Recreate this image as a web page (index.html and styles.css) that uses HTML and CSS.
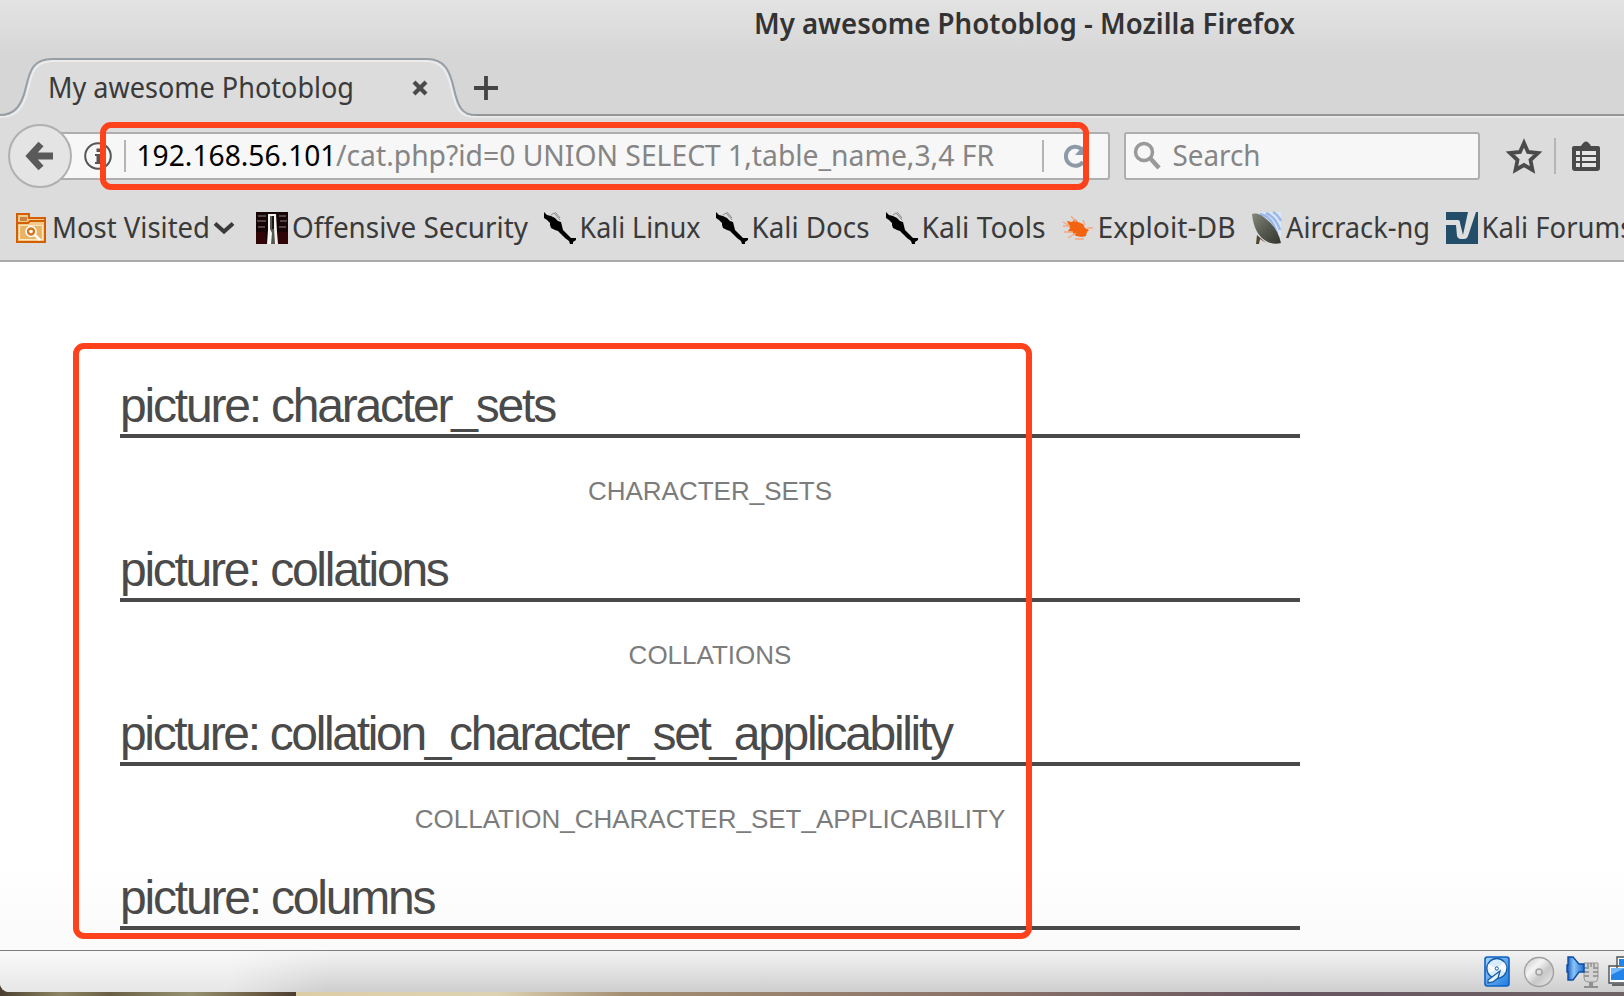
FILE: index.html
```html
<!DOCTYPE html>
<html lang="en">
<head>
<meta charset="utf-8">
<title>My awesome Photoblog</title>
<link rel="stylesheet" href="styles.css">
</head>
<body>
<svg class="defs" width="0" height="0">
  <defs>
    <symbol id="kali" viewBox="0 0 32 32">
      <path d="M0 0l3 3 4 1 4 2 3 3 3 1 1 4 1 4 4 4 4 4h5v2l-3 2v2h-3l-1-3-4-3-4-4-3-3-3-1-4-2-1-3v-2l-3-3-3-2z" fill="#000"/>
      <path d="M7 3l3-2 6 7M11 0l5 6" fill="none" stroke="#888" stroke-width="1"/>
    </symbol>
    <linearGradient id="blue" x1="0" y1="0" x2="1" y2="1"><stop offset="0" stop-color="#a9d4fb"/><stop offset="1" stop-color="#1c7be0"/></linearGradient>
    <linearGradient id="horn" x1="0" y1="0" x2="1" y2="0"><stop offset="0" stop-color="#1257b8"/><stop offset=".4" stop-color="#8cc4f8"/><stop offset="1" stop-color="#1d6fd0"/></linearGradient>
    <linearGradient id="disc" x1="0" y1="0" x2="1" y2="1"><stop offset="0" stop-color="#c4c4c4"/><stop offset=".35" stop-color="#f4f4f4"/><stop offset=".6" stop-color="#c8c8c8"/><stop offset="1" stop-color="#ececec"/></linearGradient>
    <linearGradient id="dish" x1="0" y1="0" x2="1" y2="1"><stop offset="0" stop-color="#85877b"/><stop offset=".5" stop-color="#565a50"/><stop offset="1" stop-color="#33352d"/></linearGradient>
  </defs>
</svg>
<div class="window">
  <header class="titlebar">
    <svg class="label title" width="539" height="40"><text x="-1" y="34" textLength="541" lengthAdjust="spacingAndGlyphs">My awesome Photoblog - Mozilla Firefox</text></svg>
  </header>
  <div class="tabs">
    <svg class="tab-shape" width="476" height="62" viewBox="0 0 476 62">
      <path class="tab-fill" d="M0 61C16 61 22 50 26 32S34 3 52 3H427C445 3 450 16 454 34S462 61 476 61V62H0z"/>
      <path class="tab-shine" d="M0 61C17 61 24 51 28 33S36 5 53 5H426C443 5 448 17 452 35S460 61 476 61"/>
      <path class="tab-line" d="M0 59C15 59 22 49 26 31S34 3 52 3H427C445 3 450 15 454 33S462 59 476 59"/>
    </svg>
    <div class="tab-content">
      <svg class="label" width="304" height="62"><text x="-1" y="42" textLength="306" lengthAdjust="spacingAndGlyphs">My awesome Photoblog</text></svg>
      <svg class="tab-close" width="16" height="16" viewBox="0 0 16 16"><path d="M2 2l12 12M14 2L2 14" stroke="#4a4a4a" stroke-width="4.200"/></svg>
      <svg class="tab-new" width="24" height="24" viewBox="0 0 24 24"><path d="M12 0v24M0 12h24" stroke="#444" stroke-width="3.800"/></svg>
    </div>
  </div>
  <div class="navbar">
    <div class="back"><svg width="28" height="30" viewBox="0 0 28 30"><path d="M15 3L4 15l11 12M5 15h22" fill="none" stroke="#5a5a5a" stroke-width="6.800"/></svg></div>
    <div class="urlbar">
      <svg class="info" width="28" height="28" viewBox="0 0 28 28"><circle cx="14" cy="14" r="12.800" fill="none" stroke="#555" stroke-width="2"/><path d="M12.500 6.500h4v3.500h-4zM11 12h5.500v8H18v2h-7v-2h1.500v-6H11z" fill="#555"/></svg>
      <i class="rule"></i>
      <svg class="label url" width="855" height="44"><text class="host" x="-1.500" y="32" textLength="200" lengthAdjust="spacingAndGlyphs">192.168.56.101</text><text class="path" x="198" y="32" textLength="658" lengthAdjust="spacingAndGlyphs">/cat.php?id=0 UNION SELECT 1,table_name,3,4 FR</text></svg>
      <i class="rule"></i>
      <svg class="reload" width="24" height="24" viewBox="0 0 24 24"><path d="M18.500 5A9.500 9.500 0 1 0 20 18" fill="none" stroke="#8d99a6" stroke-width="4"/><path d="M22 0v11H12z" fill="#8d99a6"/></svg>
    </div>
    <div class="search">
      <svg width="28" height="30" viewBox="0 0 28 30"><circle cx="11" cy="11" r="8.500" fill="none" stroke="#999" stroke-width="3.500"/><path d="M17 17l9 10" stroke="#999" stroke-width="4.500"/></svg>
      <svg class="label" width="86" height="44"><text x="-1.500" y="32" textLength="88" lengthAdjust="spacingAndGlyphs">Search</text></svg>
    </div>
    <svg class="star" width="34" height="34" viewBox="0 0 34 34"><path d="M17 4l4 9 10 1-7.500 7 2 10L17 26l-8.500 5 2-10L3 14l10-1z" fill="none" stroke="#4a4a4a" stroke-width="3.800"/></svg>
    <i class="rule tall"></i>
    <svg class="clipboard" width="28" height="30" viewBox="0 0 28 30"><path d="M2 5h7q5-9 10 0h7q2 0 2 2v20q0 3-3 3H3q-3 0-3-3V7q0-2 2-2z" fill="#4a4a4a"/><path d="M4 10h4v4H4zM10 10h14v4H10zM4 16h4v4H4zM10 16h14v4H10zM4 22h4v4H4zM10 22h14v4H10z" fill="#e6e6e6"/></svg>
  </div>
  <nav class="bookmarks">
    <a class="folder"><svg width="30" height="30" viewBox="0 0 30 30"><path d="M1 1h12v4h16v24H1z" fill="#f3c98d" stroke="#d45f00" stroke-width="2"/><path d="M2 10h10l2-2h14" fill="none" stroke="#d45f00" stroke-width="2"/><path d="M4 4h7v4H4z" fill="#c98240"/><path d="M3.500 12.500h23v14h-23z" fill="#e9b365" stroke="#ffe9bd" stroke-width="1.200"/><circle cx="15" cy="18.500" r="5" fill="#d77620" stroke="#fff" stroke-width="1.600"/><circle cx="15" cy="18.500" r="1.800" fill="#fff"/><path d="M19 22l5 5" stroke="#fff" stroke-width="2.500"/></svg>
      <svg class="label" width="156" height="44"><text x="-1" y="32" textLength="158" lengthAdjust="spacingAndGlyphs">Most Visited</text></svg>
      <svg class="chevron" width="20" height="12" viewBox="0 0 20 12"><path d="M1 1.500l9 8 9-8" fill="none" stroke="#3a3a3a" stroke-width="4"/></svg></a>
    <a><svg width="32" height="32" viewBox="0 0 32 32"><path d="M0 0h32v32H0z" fill="#170406"/><path d="M0 20h9l2 12H0zM22 20h10v12H21z" fill="#300508"/><path d="M2 4h8M1 9h9M2 15h7M23 4h7M24 9h7M23 15h7" stroke="#514247" stroke-width="2"/><path d="M12 2h8l1 18 1 12H11l1-14z" fill="#f4f4f1"/><path d="M14 4h4v12l1 16h-4l1-11-2-4z" fill="#565751"/><path d="M16 4h2v13h-2z" fill="#171916"/></svg>
      <svg class="label" width="235" height="44"><text x="-1" y="32" textLength="236" lengthAdjust="spacingAndGlyphs">Offensive Security</text></svg></a>
    <a><svg width="32" height="32"><use href="#kali"/></svg>
      <svg class="label" width="119" height="44"><text x="-1.500" y="32" textLength="121" lengthAdjust="spacingAndGlyphs">Kali Linux</text></svg></a>
    <a><svg width="32" height="32"><use href="#kali"/></svg>
      <svg class="label" width="115" height="44"><text x="-1.500" y="32" textLength="118" lengthAdjust="spacingAndGlyphs">Kali Docs</text></svg></a>
    <a><svg width="32" height="32"><use href="#kali"/></svg>
      <svg class="label" width="121" height="44"><text x="-1.500" y="32" textLength="124" lengthAdjust="spacingAndGlyphs">Kali Tools</text></svg></a>
    <a><svg width="31" height="32" viewBox="0 0 31 32"><path d="M4 9l5 1 3-3 3 3 5 2 2 4 4 2-2 2-1 4-4 1-6-1-4-4-4-1 2-3z" fill="#f26411"/><path d="M0 10l7 4M8 4l5 6M1 20h9M5 26l8-5M20 8l2 5M24 16h6M12 27h9M0 14h6" stroke="#f4a77c" stroke-width="1.300"/></svg>
      <svg class="label" width="135" height="44"><text x="-1.500" y="32" textLength="138" lengthAdjust="spacingAndGlyphs">Exploit-DB</text></svg></a>
    <a class="tight"><svg width="30" height="32" viewBox="0 0 30 32"><path d="M8 0h21v26z" fill="#dce7f7"/><path d="M8 2q12 2 17 20M14 1q10 4 14 17M21 0q5 3 8 9" fill="none" stroke="#9bb8e8" stroke-width="2.500"/><path d="M5 23l-1 9h3l1-5 6 4z" fill="#51452f"/><path d="M0 2q6-2 13 4 13 10 16 25-8 2-15-2Q2 22 0 2z" fill="url(#dish)"/></svg>
      <svg class="label" width="143" height="44"><text x="0" y="32" textLength="144" lengthAdjust="spacingAndGlyphs">Aircrack-ng</text></svg></a>
    <a><svg width="32" height="32" viewBox="0 0 32 32"><path d="M0 0h32v32H0z" fill="#234e69"/><path d="M0 8h12q2 0 2 3l3 12 5-23h8l-8 24q-1 3-4 3h-3q-3 0-4-3l-1-11H0z" fill="#dedede"/></svg>
      <svg class="label" width="141" height="44"><text x="-1.500" y="32" textLength="152" lengthAdjust="spacingAndGlyphs">Kali Forums</text></svg></a>
  </nav>
  <main class="page">
    <section><h2>picture: character_sets</h2><p>CHARACTER_SETS</p></section>
    <section><h2 class="snug">picture: collations</h2><p>COLLATIONS</p></section>
    <section><h2 class="snugger">picture: collation_character_set_applicability</h2><p>COLLATION_CHARACTER_SET_APPLICABILITY</p></section>
    <section><h2>picture: columns</h2></section>
  </main>
  <footer class="status">
    <svg width="26" height="31" viewBox="0 0 26 31"><rect x="1" y="1" width="24" height="29" rx="2.500" fill="url(#blue)" stroke="#0d61c4" stroke-width="1.600"/><circle cx="12.800" cy="12.500" r="10" fill="#d8ecff" stroke="#155da8" stroke-width="1.300"/><path d="M12.800 12.500L4 8q-1 5 2 9zM12.800 12.500L21 16q3-6-1-10z" fill="#fff" opacity=".8"/><circle cx="12.800" cy="12.500" r="1.600" fill="#fff" stroke="#155da8"/><path d="M16 15l-8 6-4 3v3l5-1 5-4z" fill="#e7f3ff" stroke="#155da8" stroke-width="1.300"/></svg>
    <svg class="cd" width="32" height="32" viewBox="0 0 32 32"><circle cx="16" cy="16" r="14.500" fill="url(#disc)" stroke="#a0a0a0" stroke-width="1.400"/><circle cx="16" cy="16" r="3" fill="#e0e0e0" stroke="#a3a3a3" stroke-width="1.500"/></svg>
    <svg class="audio" width="34" height="32" viewBox="0 0 34 32"><path d="M18 7h14v15q0 4-4 4h-6q-4 0-4-4z" fill="#d4d4d4" stroke="#999"/><path d="M18 12h5M18 16h5M18 20h5M27 12h5M27 16h5M27 20h5M22 7v4M25 7v4M28 7v4" stroke="#888" stroke-width="1.300"/><path d="M23 26h4v4h5v2H18v-2h5z" fill="#909090"/><path d="M2 1h5l6 7h5v8h-5l-6 8H2v-8H1V9h1z" fill="url(#horn)" stroke="#0b4ca8" stroke-width="1.400"/></svg>
    <svg width="16" height="31" viewBox="0 0 16 31"><path d="M9 1h9v14H9zM1 10h18v17H1z" fill="#fff" stroke="#4b5055" stroke-width="1.400"/><path d="M11 3h7v7h-7zM3 12h14v12H3z" fill="#2383e8"/><path d="M3 12h14l-14 7z" fill="#72b8f8"/><path d="M4 29h12" stroke="#666" stroke-width="2"/></svg>
  </footer>
  <div class="mark mark-url"></div>
  <div class="mark mark-list"></div>
</div>
</body>
</html>
```
FILE: styles.css
```css
* { box-sizing: border-box; }
html, body { margin: 0; height: 100%; overflow: hidden; }
body {
  font-family: "Liberation Sans", Arial, sans-serif;
  background:
    linear-gradient(90deg, #ddcda6 0, #ddd3b2 200px, #a48e72 330px, #897168 700px, #675560 1000px, #6f6265 1328px) 296px 0 no-repeat,
    linear-gradient(90deg, #4b4030, #8d8564 60px, #6a5f45 110px, #969170 190px, #6b5b44 260px, #4c3e31 296px);
}
.defs { position: absolute; }
.window {
  position: relative;
  display: flex;
  flex-direction: column;
  width: 1624px;
  height: 992px;
  overflow: hidden;
  background: #fff;
  border-bottom-left-radius: 9px;
}
svg { display: block; flex: none; overflow: visible; }
.label { font: 29.5px "Noto Sans", "Open Sans", sans-serif; fill: #3a3a3a; }
.titlebar {
  height: 56px;
  flex: none;
  padding-left: 755px;
  background: linear-gradient(#e3e3e3, #d6d6d6);
}
.title { font-weight: 600; font-size: 28.5px; fill: #333; }
.tabs {
  display: grid;
  height: 62px;
  flex: none;
  background: linear-gradient(#d6d6d6 0 58px, #959595 58px 60px, #e8e8e8 60px);
}
.tab-shape, .tab-content { grid-area: 1 / 1; }
.tab-fill { fill: #dcdcdc; }
.tab-line { fill: none; stroke: #969ea6; stroke-width: 2; }
.tab-shine { fill: none; stroke: #ececec; stroke-width: 2; }
.tab-content { display: flex; align-items: center; padding-left: 49px; }
.tab-close { margin: 2px 0 0 59px; }
.tab-new { margin: 1px 0 0 46px; }
.navbar {
  display: flex;
  align-items: center;
  height: 76px;
  flex: none;
  padding-left: 8px;
  background: #dcdcdc;
}
.back {
  z-index: 1;
  display: grid;
  place-items: center;
  width: 64px;
  height: 64px;
  flex: none;
  border: 2px solid #b0b0b0;
  border-radius: 50%;
  background: #e4e4e4;
}
.urlbar, .search {
  display: flex;
  align-items: center;
  height: 48px;
  flex: none;
  border: 2px solid #aeaeae;
  border-radius: 3px;
  background: #f7f7f7;
}
.urlbar { width: 1052px; margin-left: -14px; border-left: 0; }
.info { margin-left: 26px; }
.rule { width: 2px; height: 32px; flex: none; background: #b4b4b4; }
.info + .rule { margin-left: 12px; }
.url { margin: 0 49px 0 12px; }
.url .host { fill: #000; }
.url .path { fill: #858585; }
.reload { margin-left: 19px; }
.search { width: 356px; margin-left: 14px; padding-left: 7px; gap: 13px; }
.search .label { fill: #858585; }
.star { margin-left: 27px; }
.rule.tall { height: 36px; margin: 0 16px 0 13px; }
.bookmarks {
  display: grid;
  grid-template-columns: 240px 288px 172px 170px 177px 189px 194px 178px;
  height: 68px;
  flex: none;
  padding: 12px 0 0 16px;
  border-bottom: 2px solid #aaa;
  background: #dcdcdc;
}
.bookmarks a { display: flex; align-items: center; height: 44px; gap: 5px; }
.bookmarks .folder { gap: 7px; }
.bookmarks .tight { gap: 4px; }
.bookmarks .chevron { margin: 0 0 0 -2px; }
.page { flex: 1; min-height: 0; padding: 108px 0 0 120px; overflow: hidden; background: linear-gradient(#fff 600px, #fafafa); }
.page section { width: 1180px; height: 164px; }
.page h2 {
  height: 68px;
  margin: 0;
  border-bottom: 4px solid #4a4a4a;
  color: #4a4a4a;
  font: 48px/72px "Liberation Sans", Arial, sans-serif;
  letter-spacing: -2.2px;
}
.page .snug { letter-spacing: -2.28px; }
.page .snugger { letter-spacing: -2.34px; }
.page p { margin: 38px 0 0; color: #7c7c7c; font-size: 26px; line-height: 30px; text-align: center; }
.status {
  display: flex;
  height: 42px;
  flex: none;
  padding: 5px 0 0 1484px;
  border-top: 1px solid #7d7d7d;
  background:
    linear-gradient(100deg, rgba(255,255,255,.5) 230px, rgba(255,255,255,0) 330px),
    linear-gradient(#f3f3f3, #cecece);
}
.status .cd { margin-left: 13px; }
.status .audio { margin: 0 8px 0 11px; }
.mark { position: absolute; border: 6px solid #ff411c; border-radius: 11px; }
.mark-url { left: 100px; top: 122px; width: 989px; height: 68px; }
.mark-list { left: 73px; top: 343px; width: 959px; height: 596px; }
```
